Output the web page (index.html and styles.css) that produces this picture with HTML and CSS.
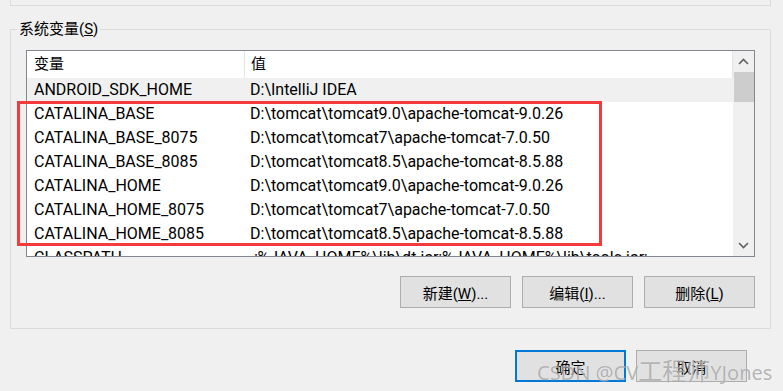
FILE: index.html
```html
<!DOCTYPE html>
<html lang="zh-CN">
<head>
  <meta charset="UTF-8" />
  <title>环境变量</title>
  <link rel="stylesheet" href="styles.css">
</head>
<body>

  <div class="top-box"></div>

  <div class="group">
    <div class="group-label">系统变量(<u>S</u>)</div>

    <div class="list">
      <div class="list-main">
        <div class="row header">
          <div class="col name">变量</div>
          <div class="col value">值</div>
        </div>
        <div class="row selected">
          <div class="col name">ANDROID_SDK_HOME</div>
          <div class="col value">D:\IntelliJ IDEA</div>
        </div>
        <div class="row">
          <div class="col name">CATALINA_BASE</div>
          <div class="col value">D:\tomcat\tomcat9.0\apache-tomcat-9.0.26</div>
        </div>
        <div class="row">
          <div class="col name">CATALINA_BASE_8075</div>
          <div class="col value">D:\tomcat\tomcat7\apache-tomcat-7.0.50</div>
        </div>
        <div class="row">
          <div class="col name">CATALINA_BASE_8085</div>
          <div class="col value">D:\tomcat\tomcat8.5\apache-tomcat-8.5.88</div>
        </div>
        <div class="row">
          <div class="col name">CATALINA_HOME</div>
          <div class="col value">D:\tomcat\tomcat9.0\apache-tomcat-9.0.26</div>
        </div>
        <div class="row">
          <div class="col name">CATALINA_HOME_8075</div>
          <div class="col value">D:\tomcat\tomcat7\apache-tomcat-7.0.50</div>
        </div>
        <div class="row">
          <div class="col name">CATALINA_HOME_8085</div>
          <div class="col value">D:\tomcat\tomcat8.5\apache-tomcat-8.5.88</div>
        </div>
        <div class="row">
          <div class="col name">CLASSPATH</div>
          <div class="col value">.;%JAVA_HOME%\lib\dt.jar;%JAVA_HOME%\lib\tools.jar;</div>
        </div>
      </div>

      <div class="scrollbar">
        <div class="scroll-btn">
          <svg width="11" height="7" viewBox="0 0 11 7"><polyline points="1,6 5.5,1.5 10,6" fill="none" stroke="#606060" stroke-width="1.6"/></svg>
        </div>
        <div class="scroll-thumb"></div>
        <div class="scroll-track"></div>
        <div class="scroll-btn">
          <svg width="11" height="7" viewBox="0 0 11 7"><polyline points="1,1 5.5,5.5 10,1" fill="none" stroke="#606060" stroke-width="1.6"/></svg>
        </div>
      </div>
    </div>

    <div class="actions">
      <button class="btn">新建(<u>W</u>)...</button>
      <button class="btn">编辑(<u>I</u>)...</button>
      <button class="btn">删除(<u>L</u>)</button>
    </div>
  </div>

  <div class="dialog-actions">
    <button class="btn default">确定</button>
    <button class="btn">取消</button>
  </div>

  <!-- annotation + watermark sit on top of the dialog -->
  <div class="highlight"></div>
  <div class="watermark">CSDN @CV<span class="wm-cjk">工程师</span>YJones</div>

</body>
</html>
```

FILE: styles.css
```css
body {
  margin: 0;
  width: 783px;
  height: 391px;
  overflow: hidden;
  position: relative;
  background: #f0f0f0;
  color: #000;
  font-family: Roboto, "Noto Sans CJK SC", sans-serif;
  font-size: 15px;
}

.top-box {
  height: 5px;
  margin: 0 12px 0 10px;
  border: 1px solid #dcdcdc;
  border-top: none;
}

.group {
  margin: 23px 12px 0 10px;
  border: 1px solid #dcdcdc;
  padding-bottom: 20px;
}

.group-label {
  width: fit-content;
  margin: -11px 0 0 6px;
  padding: 0 2px;
  line-height: 20px;
  background: #f0f0f0;
}

.list {
  display: flex;
  height: 205px;
  margin: 11px 15px 0 15px;
  border: 1px solid #828790;
  background: #fff;
}

.list-main {
  flex: 1;
  overflow: hidden;
}

.row {
  display: flex;
  height: 24px;
  line-height: 24px;
  font-size: 16px;
  white-space: nowrap;
}

.row.header {
  height: 27px;
  line-height: 27px;
  font-size: 15px;
}

.row.selected {
  background: #f0f0f0;
}

.col {
  overflow: hidden;
}

.col.name {
  width: 210px;
  padding-left: 7px;
}

.col.value {
  flex: 1;
  padding-left: 6px;
}

.header .col.name {
  border-right: 1px solid #e5e5e5;
}

.header .col.value {
  border-right: 1px solid #e5e5e5;
}

.scrollbar {
  width: 21px;
  display: flex;
  flex-direction: column;
  background: #f0f0f0;
}

.scroll-btn {
  height: 21px;
  display: flex;
  align-items: center;
  justify-content: center;
}

.scroll-thumb {
  height: 30px;
  background: #cdcdcd;
  margin-left: 1px;
}

.scroll-track {
  flex: 1;
}

.actions {
  display: flex;
  justify-content: flex-end;
  gap: 11px;
  margin: 19px 15px 0 0;
}

.btn {
  width: 111px;
  height: 32px;
  padding: 0;
  background: #e1e1e1;
  border: 1px solid #adadad;
  border-radius: 0;
  font-family: inherit;
  font-size: 15px;
  color: #000;
}

.btn.default {
  border: 2px solid #0078d7;
}

.dialog-actions {
  display: flex;
  justify-content: flex-end;
  gap: 10px;
  margin: 21px 36px 0 0;
}

.highlight {
  position: absolute;
  left: 17px;
  top: 101px;
  width: 579px;
  height: 139px;
  border: 3px solid #f43a3a;
}

.watermark {
  position: absolute;
  left: 537px;
  top: 357px;
  font-family: "Noto Sans", "Noto Sans CJK SC", sans-serif;
  font-size: 20px;
  line-height: 28px;
  color: rgba(110, 110, 110, 0.5);
  text-shadow: 0 0 1px rgba(255, 255, 255, 0.8);
  white-space: nowrap;
}

.wm-cjk {
  font-size: 24px;
}
```
